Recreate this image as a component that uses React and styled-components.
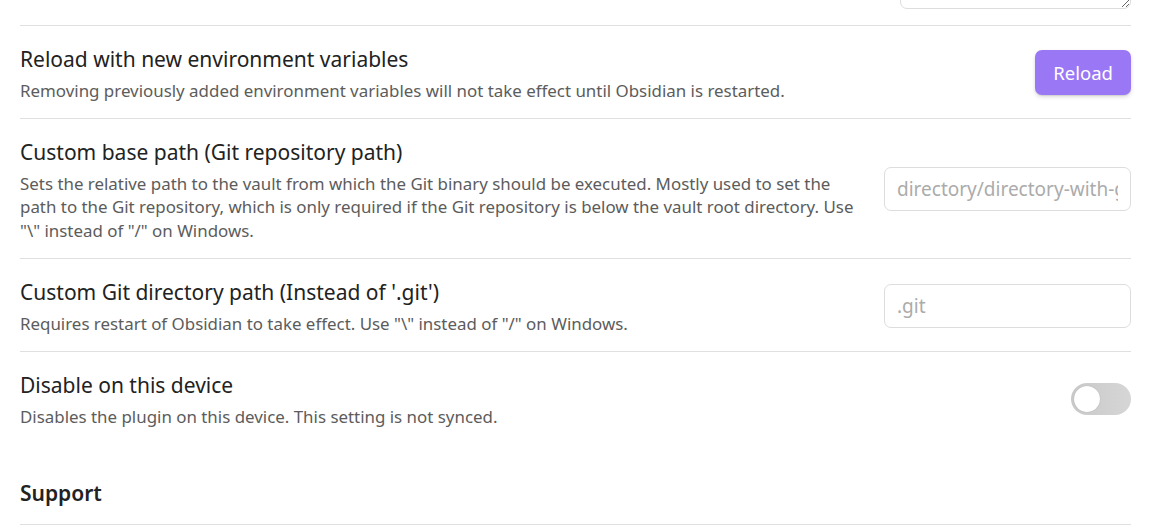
import React, { useState } from 'react';
import styled, { createGlobalStyle } from 'styled-components';

const GlobalStyle = createGlobalStyle`
  html, body {
    margin: 0;
    padding: 0;
    background: #ffffff;
    overflow: hidden;
  }
  body {
    font-family: 'Noto Sans', 'Open Sans', sans-serif;
    color: #222222;
  }
`;

const Page = styled.div`
  width: 1111px;
  padding: 0 23px 0 20px;
  margin-top: -101px;
`;

const Item = styled.div`
  display: flex;
  align-items: center;
  padding: 18px 0 15.5px;
  border-top: ${({ $first }) => ($first ? 'none' : '1px solid #e0e0e0')};
`;

const Info = styled.div`
  flex: 1 1 auto;
  margin-right: 20px;
`;

const Name = styled.div`
  font-size: 21px;
  line-height: 30px;
  color: #222222;
`;

const Desc = styled.div`
  padding-top: 5px;
  font-size: 16.9px;
  line-height: 23.5px;
  color: #5c5c5c;
`;

const Control = styled.div`
  flex: 0 0 auto;
  display: flex;
  align-items: center;
  justify-content: flex-end;
`;

const TextArea = styled.textarea`
  display: block;
  width: 231px;
  height: 92px;
  box-sizing: border-box;
  border: 1px solid #dddddd;
  border-radius: 7px;
  resize: vertical;
  font-family: inherit;
  font-size: 18px;
  padding: 6px 12px;
  outline: none;
`;

const Input = styled.input`
  width: 247px;
  height: 44px;
  box-sizing: border-box;
  border: 1px solid #dddddd;
  border-radius: 7px;
  padding: 0 12px;
  font-family: inherit;
  font-size: 19px;
  color: #222222;
  background: #ffffff;
  outline: none;
  &::placeholder {
    color: #ababab;
  }
`;

const Button = styled.button`
  height: 45px;
  padding: 0 18px;
  border: none;
  border-radius: 7px;
  background: #9a77f5;
  color: #ffffff;
  font-family: inherit;
  font-size: 18.5px;
  box-shadow: 0 2px 4px rgba(0, 0, 0, 0.14), 0 1px 1px rgba(0, 0, 0, 0.08);
  cursor: pointer;
`;

const Toggle = styled.div`
  position: relative;
  width: 60px;
  height: 32px;
  border-radius: 16px;
  background: ${({ $on }) => ($on ? '#9a77f5' : 'linear-gradient(90deg, #c9c9c9, #d6d6d6)')};
  cursor: pointer;
`;

const Knob = styled.div`
  position: absolute;
  top: 3px;
  left: ${({ $on }) => ($on ? '31px' : '3px')};
  width: 26px;
  height: 26px;
  border-radius: 50%;
  background: #ffffff;
  box-shadow: 0 0 1px rgba(0, 0, 0, 0.25);
`;

const Heading = styled.div`
  padding: 34px 0 16px;
  border-bottom: 1px solid #e0e0e0;
  font-size: 21px;
  line-height: 30px;
  font-weight: 600;
  color: #222222;
`;

function Setting({ first, name, desc, children }) {
  return (
    <Item $first={first}>
      <Info>
        {name && <Name>{name}</Name>}
        {desc && <Desc>{desc}</Desc>}
      </Info>
      <Control>{children}</Control>
    </Item>
  );
}

export default function App() {
  const [disabled, setDisabled] = useState(false);

  return (
    <>
      <GlobalStyle />
      <Page>
        {/* tail of the setting above, scrolled mostly out of view */}
        <Setting first>
          <TextArea defaultValue="" />
        </Setting>
        <Setting
          name="Reload with new environment variables"
          desc="Removing previously added environment variables will not take effect until Obsidian is restarted."
        >
          <Button>Reload</Button>
        </Setting>
        <Setting
          name="Custom base path (Git repository path)"
          desc={'Sets the relative path to the vault from which the Git binary should be executed. Mostly used to set the path to the Git repository, which is only required if the Git repository is below the vault root directory. Use "\\" instead of "/" on Windows.'}
        >
          <Input placeholder="directory/directory-with-git" />
        </Setting>
        <Setting
          name="Custom Git directory path (Instead of '.git')"
          desc={'Requires restart of Obsidian to take effect. Use "\\" instead of "/" on Windows.'}
        >
          <Input placeholder=".git" />
        </Setting>
        <Setting
          name="Disable on this device"
          desc="Disables the plugin on this device. This setting is not synced."
        >
          <Toggle $on={disabled} onClick={() => setDisabled(!disabled)}>
            <Knob $on={disabled} />
          </Toggle>
        </Setting>
        <Heading>Support</Heading>
      </Page>
    </>
  );
}
